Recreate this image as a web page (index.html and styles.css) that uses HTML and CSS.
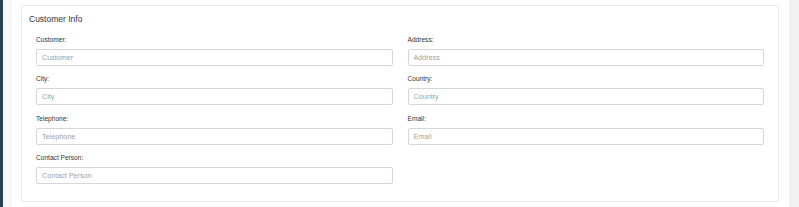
FILE: index.html
```html
<!DOCTYPE html>
<html lang="en">
<head>
  <meta charset="UTF-8">
  <title>Customer Info</title>
  <link rel="stylesheet" href="styles.css">
</head>
<body>
  <div class="sidebar"></div>
  <div class="gutter"></div>
  <main class="content">
    <div class="panel">
      <h2 class="panel-title">Customer Info</h2>
      <form class="customer-form">
        <div class="form-group">
          <label for="customer">Customer:</label>
          <input type="text" id="customer" placeholder="Customer">
        </div>
        <div class="form-group">
          <label for="address">Address:</label>
          <input type="text" id="address" placeholder="Address">
        </div>
        <div class="form-group">
          <label for="city">City:</label>
          <input type="text" id="city" placeholder="City">
        </div>
        <div class="form-group">
          <label for="country">Country:</label>
          <input type="text" id="country" placeholder="Country">
        </div>
        <div class="form-group">
          <label for="telephone">Telephone:</label>
          <input type="text" id="telephone" placeholder="Telephone">
        </div>
        <div class="form-group">
          <label for="email">Email:</label>
          <input type="text" id="email" placeholder="Email">
        </div>
        <div class="form-group">
          <label for="contact">Contact Person:</label>
          <input type="text" id="contact" placeholder="Contact Person">
        </div>
      </form>
    </div>
  </main>
  <div class="scrollbar"></div>
</body>
</html>
```

FILE: styles.css
```css
* {
  margin: 0;
  padding: 0;
  box-sizing: border-box;
  font-family: 'Liberation Sans', Arial, sans-serif;
}

body {
  height: 100vh;
  display: flex;
  overflow: hidden;
  background-color: #fff;
  color: #333;
}

.sidebar {
  width: 3px;
  background-color: #2a3f54;
}

.gutter {
  width: 9px;
  background-color: #f7f7f7;
}

.content {
  flex: 1;
  padding: 5px 10px 0 9px;
}

.scrollbar {
  width: 10px;
  background-color: #f1f1f1;
}

.panel {
  border: 1px solid #e6e9ed;
  border-radius: 2px;
  padding: 8px 0 17px;
}

.panel-title {
  font-size: 8.5px;
  line-height: 11px;
  font-weight: normal;
  color: #333;
  padding-left: 7px;
  margin-bottom: 11px;
}

.customer-form {
  display: grid;
  grid-template-columns: 1fr 1fr;
  column-gap: 15px;
  row-gap: 9.33px;
  padding: 0 14px;
}

.form-group label {
  display: block;
  font-size: 6.6px;
  line-height: 8px;
  color: #333;
  margin-bottom: 5px;
}

.form-group input {
  display: block;
  width: 100%;
  height: 17px;
  padding: 0 5px;
  border: 1px solid #d6d6d6;
  border-radius: 2px;
  font-size: 7.2px;
  color: #555;
  background-color: #fff;
  outline: none;
}

.form-group input::placeholder {
  color: #a0a0a0;
}
```
